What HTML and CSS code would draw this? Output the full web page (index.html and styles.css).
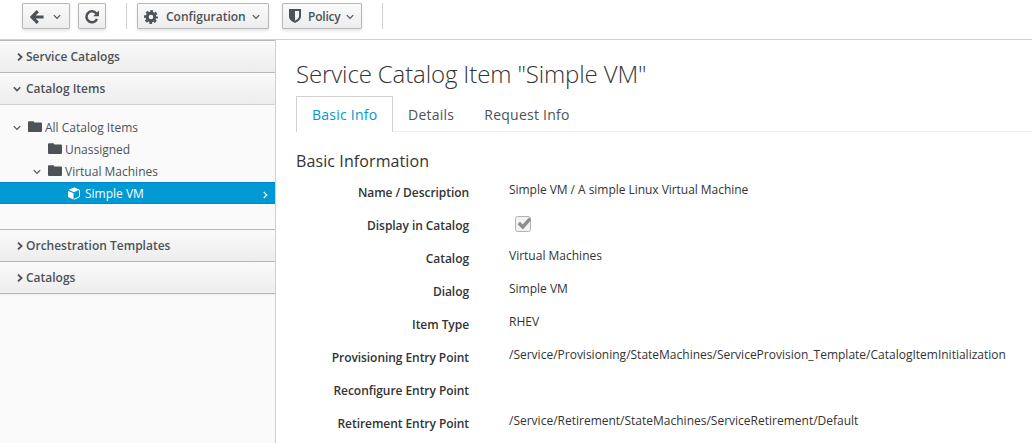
FILE: index.html
```html
<!DOCTYPE html>
<html lang="en">
<head>
<meta charset="utf-8">
<title>Service Catalog Item</title>
<link rel="stylesheet" href="styles.css">
</head>
<body>
<svg class="sprite" width="0" height="0" aria-hidden="true">
  <symbol id="down" viewBox="0 0 8 6"><path d="M.8 1.2 4 4.5 7.2 1.2" fill="none" stroke="currentColor" stroke-width="1.2"/></symbol>
  <symbol id="right" viewBox="0 0 6 8"><path d="M1 .6 4.6 4 1 7.4" fill="none" stroke="currentColor" stroke-width="1.8"/></symbol>
  <symbol id="folder" viewBox="0 0 14 12"><path d="M0 1.2Q0 .2 1 .2h4.3q.9 0 .9 1v.3H13q1 0 1 1V10q0 1-1 1H1q-1 0-1-1z" fill="currentColor"/></symbol>
</svg>
<header class="toolbar">
  <button class="btn btn-back"><svg width="14" height="14" viewBox="0 0 14 14"><path d="M7.8 1.2 2.1 7l5.7 5.8M2.6 7h11" fill="none" stroke="currentColor" stroke-width="3.2"/></svg><svg class="caret" width="8" height="6"><use href="#down"/></svg></button>
  <button class="btn btn-reload"><svg width="14" height="14" viewBox="0 0 14 14"><path d="M11.3 3.4A5.5 5.5 0 1 0 12 9.1" fill="none" stroke="currentColor" stroke-width="2.5"/><path d="M14 .4v5.8H8.2z" fill="currentColor"/></svg></button>
  <span class="divider"></span>
  <button class="btn btn-config"><svg width="14" height="14" viewBox="0 0 14 14"><path d="M7 1.6a5.4 5.4 0 1 1 0 10.8A5.4 5.4 0 0 1 7 1.6m0 3.1a2.3 2.3 0 1 0 0 4.6 2.3 2.3 0 0 0 0-4.6" fill="currentColor" fill-rule="evenodd"/><circle cx="7" cy="7" r="6" fill="none" stroke="currentColor" stroke-width="1.9" stroke-dasharray="2.8 1.912" stroke-dashoffset="1.4"/></svg><span>Configuration</span><svg class="caret" width="8" height="6"><use href="#down"/></svg></button>
  <button class="btn btn-policy"><svg width="12" height="14" viewBox="0 0 12 14"><path d="M0 0h12v7.3c0 3.2-2.7 5-6 6.7-3.3-1.7-6-3.5-6-6.7zm6 2v9.8c2.2-1.2 4-2.4 4-4.5V2z" fill="currentColor" fill-rule="evenodd"/></svg><span>Policy</span><svg class="caret" width="8" height="6"><use href="#down"/></svg></button>
  <span class="divider divider-end"></span>
</header>
<div class="layout">
  <aside class="sidebar">
    <div class="section"><svg class="arrow" width="6" height="8"><use href="#right"/></svg><span>Service Catalogs</span></div>
    <div class="section section-open"><svg class="arrow arrow-down" width="8" height="6"><path d="M.8 1.2 4 4.5 7.2 1.2" fill="none" stroke="currentColor" stroke-width="1.6"/></svg><span>Catalog Items</span></div>
    <div class="tree">
      <div class="node level-1"><svg class="toggle" width="8" height="6"><use href="#down"/></svg><svg class="folder" width="14" height="12"><use href="#folder"/></svg><span>All Catalog Items</span></div>
      <div class="node level-2"><svg class="folder" width="14" height="12"><use href="#folder"/></svg><span>Unassigned</span></div>
      <div class="node level-2 has-toggle"><svg class="toggle" width="8" height="6"><use href="#down"/></svg><svg class="folder" width="14" height="12"><use href="#folder"/></svg><span>Virtual Machines</span></div>
      <div class="node level-3 selected"><svg class="cube" width="12" height="13" viewBox="0 0 12 13"><path d="M6 .5 11.3 2.8 6 5.2.7 2.8zM0 3.8l5.5 2.5v6.2L0 9.9z" fill="currentColor"/><path d="M6 .9 11.5 3.2v6.6L6 12.3" fill="none" stroke="currentColor"/></svg><span>Simple VM</span><svg class="next" width="5" height="8" viewBox="0 0 5 8"><path d="M.8 1 3.8 4l-3 3" fill="none" stroke="currentColor" stroke-width="1.2"/></svg></div>
    </div>
    <div class="section section-after"><svg class="arrow" width="6" height="8"><use href="#right"/></svg><span>Orchestration Templates</span></div>
    <div class="section section-last"><svg class="arrow" width="6" height="8"><use href="#right"/></svg><span>Catalogs</span></div>
  </aside>
  <main class="content">
    <h1>Service Catalog Item "Simple VM"</h1>
    <nav class="tabs"><a class="tab active">Basic Info</a><a class="tab">Details</a><a class="tab">Request Info</a></nav>
    <h3>Basic Information</h3>
    <dl class="form">
      <dt>Name / Description</dt><dd class="name">Simple VM / A simple Linux Virtual Machine</dd>
      <dt>Display in Catalog</dt><dd><svg class="check" width="16" height="16" viewBox="0 0 16 16"><rect x=".5" y=".5" width="15" height="15" rx="2" fill="#f2f2f2" stroke="#b3b3b3"/><path d="M3.8 7 7.8 11l7.4-8.3" fill="none" stroke="#8b8d8f" stroke-width="3.4"/></svg></dd>
      <dt>Catalog</dt><dd>Virtual Machines</dd>
      <dt>Dialog</dt><dd>Simple VM</dd>
      <dt>Item Type</dt><dd>RHEV</dd>
      <dt>Provisioning Entry Point</dt><dd>/Service/Provisioning/StateMachines/ServiceProvision_Template/CatalogItemInitialization</dd>
      <dt>Reconfigure Entry Point</dt><dd></dd>
      <dt>Retirement Entry Point</dt><dd>/Service/Retirement/StateMachines/ServiceRetirement/Default</dd>
    </dl>
  </main>
</div>
</body>
</html>
```
FILE: styles.css
```css
* { box-sizing: border-box; }
body { margin: 0; height: 443px; overflow: hidden; background: #fff; color: #333; font: 12px/20px "Open Sans", sans-serif; }
svg { display: block; flex: none; }
.sprite { position: absolute; }
.toolbar { display: flex; height: 40px; padding: 3px 0 0 22px; border-bottom: 1px solid #d1d1d1; }
.btn { display: flex; align-items: center; height: 26px; padding: 2px 6px 0; border: 1px solid #b7b7b7; border-radius: 1px; background: linear-gradient(#fafafa, #ededed); box-shadow: 0 2px 3px rgba(3, 3, 3, .1); color: #4d5258; font: 600 12px/20px "Open Sans", sans-serif; white-space: nowrap; }
.btn .caret { margin-left: auto; }
.btn-back { width: 48px; padding-left: 7px; padding-right: 8px; }
.btn-reload { width: 28px; margin-left: 8px; }
.divider { width: 1px; height: 26px; margin-left: 20px; background: #d1d1d1; }
.btn-config { width: 132px; margin-left: 10px; }
.btn-config span { margin-left: 8px; }
.btn-config .caret { margin-right: 2px; }
.btn-policy .caret { margin-right: 1px; }
.btn-policy { width: 80px; margin-left: 13px; letter-spacing: -.2px; }
.btn-policy > svg:first-child { margin-top: -2px; }
.btn-policy span { margin-left: 7px; }
.layout { display: flex; height: 403px; }
.sidebar { width: 276px; flex: none; background: #fafafa; border-right: 1px solid #d1d1d1; color: #4d5258; }
.section { display: flex; align-items: center; height: 32px; padding-left: 17px; border-bottom: 1px solid #b7b7b7; background: linear-gradient(#fafafa, #ededed); font-weight: 600; }
.section:first-child { height: 33px; border-top: 1px solid #b7b7b7; }
.section-open { padding-left: 13px; border-bottom-color: #d1d1d1; }
.section-after { height: 33px; border-top: 1px solid #b7b7b7; }
.section-last { box-shadow: 0 1px 1px rgba(0, 0, 0, .05); }
.arrow { margin-right: 3px; }
.arrow-down { margin-right: 5px; }
.tree { height: 124px; padding-top: 11px; }
.node { display: flex; align-items: center; height: 22px; }
.node span { padding-top: 2px; }
.level-1 { padding-left: 13px; }
.level-2 { padding-left: 48px; }
.has-toggle { padding-left: 33px; }
.toggle { margin: 2px 7px 0 0; }
.folder { margin-right: 3px; }
.level-3 { padding-left: 68px; }
.selected { border-top: 1px solid #0088ce; border-bottom: 1px solid #0088ce; background: #0099d3; color: #fff; }
.cube { margin: 1px 5px 0 0; }
.next { margin: 3px 7px 0 auto; }
.content { flex: 1; min-width: 0; padding: 18px 0 0 20px; }
h1 { margin: 0; font-size: 24px; line-height: 32px; font-weight: 300; letter-spacing: -.13px; }
.tabs { display: flex; height: 36px; margin-top: 6px; border-bottom: 1px solid #ededed; color: #4d5258; font-size: 14px; letter-spacing: .25px; }
.tab { padding: 9px 15px 0; height: 36px; }
.active { width: 97px; border: 1px solid #d1d1d1; border-bottom: 0; padding: 8px 0 0 15px; background: #fff; color: #0099d3; }
h3 { margin: 18px 0 0; font-size: 16px; line-height: 22px; font-weight: 400; letter-spacing: .1px; }
.form { display: grid; grid-template-columns: 173px 1fr; column-gap: 40px; grid-auto-rows: 33px; margin: 8px 0 0; }
dt { padding-top: 3px; text-align: right; font-weight: 600; letter-spacing: -.06px; }
dd { margin: 0; white-space: nowrap; }
.name { letter-spacing: -.04px; }
.check { margin: 3px 0 0 6px; }
```
